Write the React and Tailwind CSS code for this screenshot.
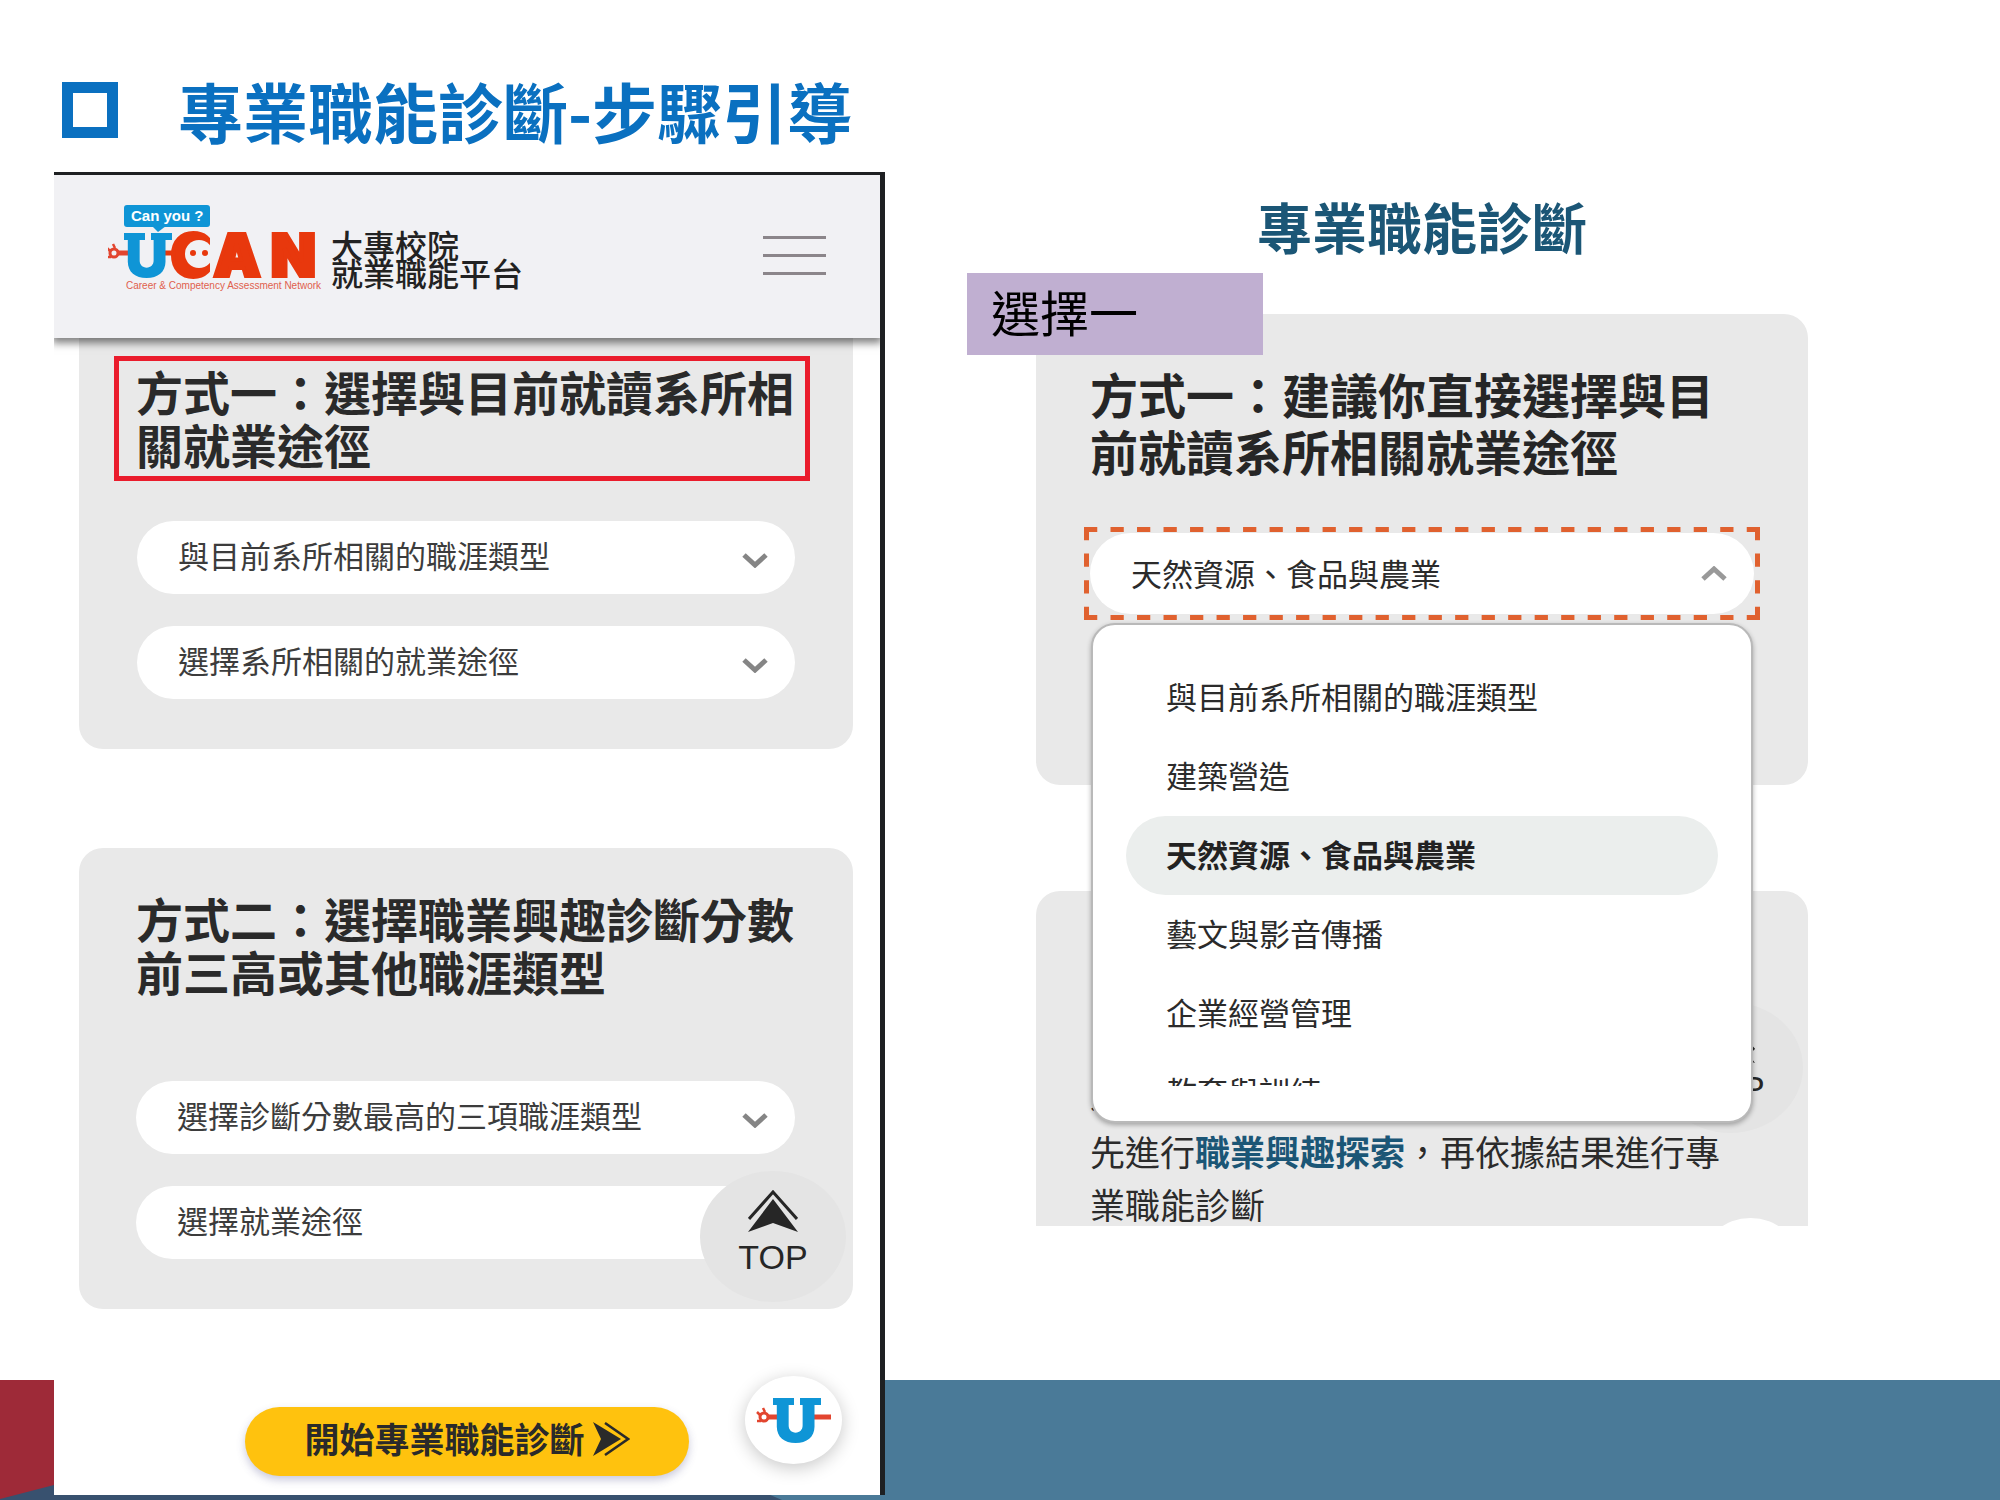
import React, { useState } from "react";

const careerTypes = [
  "與目前系所相關的職涯類型",
  "建築營造",
  "天然資源、食品與農業",
  "藝文與影音傳播",
  "企業經營管理",
  "教育與訓練",
];

const Chevron = ({ up }) => (
  <svg
    viewBox="0 0 26 15"
    className={
      up ? "w-[26px] h-[15px] rotate-180" : "w-[26px] h-[15px]"
    }
    fill="none"
    stroke={up ? "#999999" : "#858585"}
    strokeWidth="5"
    aria-hidden="true"
  >
    <path d="M2 2 L13 12 L24 2" />
  </svg>
);

// Plug with a cord end, shared by the header logo and the chat bubble
const Plug = () => (
  <g fill="none" stroke="#e2452f" strokeWidth="3">
    <circle cx="8" cy="14" r="4" />
    <path d="M7 5 L9 9 M1 9 L4 12 M1 18 H5" strokeWidth="2.5" />
    <path d="M12 14 H24" strokeWidth="5" />
  </g>
);

// Slab "U": plain letter with a bar on each stem
const SlabU = () => (
  <g fill="#0f95d6">
    <text x="0" y="44" fontSize="60" fontWeight="900" fontFamily="Inter, sans-serif">
      U
    </text>
    <rect x="-1" y="0" width="21" height="7" />
    <rect x="26" y="0" width="21" height="7" />
  </g>
);

const Logo = () => (
  <svg viewBox="0 0 216 88" className="w-[216px] h-[88px]" role="img" aria-label="UCAN">
    <rect x="16" y="0" width="86" height="22" rx="3" fill="#0f95d6" />
    <path d="M44 21 H58 L50 27 Z" fill="#0f95d6" />
    <text x="23" y="16" fontSize="15" fontWeight="700" fill="#ffffff" fontFamily="Liberation Sans, sans-serif">
      Can you ?
    </text>
    <g transform="translate(-2 34)">
      <Plug />
    </g>
    <g fill="#e8380d" stroke="#e8380d" strokeWidth="4" fontWeight="900" fontFamily="Inter, sans-serif" fontSize="58">
      <text x="63" y="71">C</text>
      <circle cx="91" cy="49" r="14" fill="#f1f1f4" stroke="none" />
      <rect x="102" y="24" width="12" height="52" fill="#f1f1f4" stroke="none" />
      <text x="106" y="71">A</text>
      <text x="163" y="71">N</text>
    </g>
    <circle cx="85" cy="48" r="3" fill="#e8380d" />
    <circle cx="97" cy="48" r="3" fill="#e8380d" />
    <path d="M56 48 H66" stroke="#e8380d" strokeWidth="5" />
    <g transform="translate(17 28)">
      <SlabU />
    </g>
    <text x="18" y="84" fontSize="10" fill="#e0604c" fontFamily="Liberation Sans, sans-serif">
      Career &amp; Competency Assessment Network
    </text>
  </svg>
);

const SelectPill = ({ id, label }) => (
  <div className="relative">
    <select
      id={id}
      aria-label={label}
      className="block w-full h-[73px] appearance-none rounded-full bg-white pl-[41px] pr-16 pb-[5px] text-[31px] text-[#3c3c3c]"
    >
      <option>{label}</option>
    </select>
    <span className="pointer-events-none absolute right-[27px] top-[32px]">
      <Chevron />
    </span>
  </div>
);

const TopButton = () => (
  <button className="flex h-[131px] w-[146px] flex-col items-center rounded-[50%] bg-[#e4e4e4] pt-[19px] text-[#262626]">
    <svg viewBox="0 0 50 42" className="h-[42px] w-[50px]" aria-hidden="true">
      <path d="M1 29 L25 2 L49 29" fill="none" stroke="#262626" strokeWidth="3" />
      <path d="M25 9 L50 42 L25 33 L0 42 Z" fill="#262626" />
    </svg>
    <span className="mt-2 font-['Liberation_Sans',sans-serif] text-[34px] leading-[34px]">
      TOP
    </span>
  </button>
);

const PhoneHeader = () => (
  <header className="relative z-10 flex h-[163px] items-start bg-[#f1f1f4] px-[54px] pt-[30px] shadow-[0_3px_8px_2px_rgba(0,0,0,0.5)]">
    <Logo />
    <p className="ml-[7px] pt-[25px] text-[32px] leading-[28px] font-medium text-[#222222]">
      大專校院
      <br />
      就業職能平台
    </p>
    <button aria-label="選單" className="mt-[31px] ml-auto flex flex-col gap-[15px]">
      <span className="h-[3px] w-[63px] bg-[#8b858a]" />
      <span className="h-[3px] w-[63px] bg-[#8b858a]" />
      <span className="h-[3px] w-[63px] bg-[#8b858a]" />
    </button>
  </header>
);

const Phone = () => (
  <div className="relative ml-[54px] overflow-hidden border-t-[3px] border-r-[5px] border-[#1e2022] bg-white pb-[19px]">
    <PhoneHeader />

    <section className="mr-[27px] ml-[25px] rounded-b-3xl bg-[#e9e9e9] pt-[18px] pb-[50px]">
      <h2 className="mr-[43px] ml-[35px] border-[5px] border-[#ea1c2c] pt-[3px] pb-[6px] pl-[17px] text-[47px] leading-[53px] font-bold text-[#2a2a2a]">
        方式一：選擇與目前就讀系所相關就業途徑
      </h2>
      <div className="mt-10 mr-[58px] ml-[58px] flex flex-col gap-8">
        <SelectPill id="dept-type" label="與目前系所相關的職涯類型" />
        <SelectPill id="dept-path" label="選擇系所相關的就業途徑" />
      </div>
    </section>

    <section className="relative mt-[99px] mr-[27px] ml-[25px] rounded-3xl bg-[#e9e9e9] pt-[43px] pb-[50px] pl-[57px]">
      <h2 className="pr-[58px] text-[47px] leading-[53px] font-bold text-[#2a2a2a]">
        方式二：選擇職業興趣診斷分數前三高或其他職涯類型
      </h2>
      <div className="mt-[84px] mr-[58px] flex flex-col gap-8">
        <SelectPill id="top-three" label="選擇診斷分數最高的三項職涯類型" />
        <SelectPill id="job-path" label="選擇就業途徑" />
      </div>
      <div className="absolute right-[7px] bottom-[7px]">
        <TopButton />
      </div>
    </section>

    <button className="mx-auto mt-[98px] flex h-[69px] w-[444px] items-center justify-center gap-2 rounded-full bg-[#ffc20e] pb-[6px] text-[35px] font-bold text-[#2a2a2a] shadow-[0_4px_8px_rgba(80,80,140,0.3)]">
      開始專業職能診斷
      <svg viewBox="0 0 37 34" className="h-[34px] w-[37px]" aria-hidden="true">
        <path d="M12 1 L35 17 L12 33" fill="none" stroke="#2a2a2a" strokeWidth="2.5" />
        <path d="M0 0 L28 17 L0 34 L8 17 Z" fill="#2a2a2a" />
      </svg>
    </button>

    <button
      aria-label="UCAN"
      className="absolute right-[38px] bottom-[31px] flex h-[88px] w-[97px] items-center justify-center rounded-[50%] bg-white shadow-[0_4px_18px_rgba(0,0,0,0.22)]"
    >
      <svg viewBox="0 0 76 50" className="h-[50px] w-[76px]" aria-hidden="true">
        <g transform="translate(0 8)">
          <Plug />
        </g>
        <path d="M58 22 H75" stroke="#e2452f" strokeWidth="5" />
        <g transform="translate(18 3)">
          <SlabU />
        </g>
      </svg>
    </button>
  </div>
);

const CareerDropdown = () => {
  const [open, setOpen] = useState(true);
  const [selected, setSelected] = useState("天然資源、食品與農業");

  const handleSelect = (type) => {
    setSelected(type);
    setOpen(false);
  };

  return (
    <div className="relative mx-12 mt-12 px-[6px] py-[6px]">
      <button
        aria-haspopup="listbox"
        aria-expanded={open}
        onClick={() => setOpen(!open)}
        className="flex h-[81px] w-full items-center justify-between rounded-full bg-white pr-[27px] pl-[41px] text-[31px] text-[#2b2b2b]"
      >
        {selected}
        <Chevron up={open} />
      </button>

      {/* Dashed highlight around the field */}
      <svg
        className="pointer-events-none absolute inset-0 h-full w-full"
        viewBox="0 0 676 93"
        preserveAspectRatio="none"
        fill="none"
        stroke="#e0612f"
        strokeWidth="5"
        aria-hidden="true"
      >
        <path d="M0 2.5 H676" pathLength="51" strokeDasharray="1 1" />
        <path d="M0 90.5 H676" pathLength="51" strokeDasharray="1 1" />
        <path d="M2.5 0 V93" pathLength="7" strokeDasharray="1 1" />
        <path d="M673.5 0 V93" pathLength="7" strokeDasharray="1 1" />
      </svg>

      {open && (
        <div className="absolute inset-x-[7px] top-[96px] rounded-3xl border-2 border-[#b9b9b9] bg-white px-[33px] pt-[33px] pb-[35px] shadow-[0_2px_5px_rgba(0,0,0,0.3)]">
          <ul role="listbox" aria-label="職涯類型" className="h-[428px] overflow-hidden">
            {careerTypes.map((type) => (
              <li
                key={type}
                role="option"
                aria-selected={type === selected}
                onClick={() => handleSelect(type)}
                className={
                  type === selected
                    ? "h-[79px] cursor-pointer rounded-full bg-[#ebeeed] pl-10 text-[31px] leading-[75px] font-bold text-[#222222]"
                    : "h-[79px] cursor-pointer pl-10 text-[31px] leading-[75px] text-[#2b2b2b]"
                }
              >
                {type}
              </li>
            ))}
          </ul>
        </div>
      )}
    </div>
  );
};

const Guide = () => (
  <div className="pt-[197px] pr-[192px] pl-[151px]">
    <h2 className="text-center text-[55px] leading-[56px] font-bold text-[#1b5676]">
      專業職能診斷
    </h2>

    <section className="relative z-10 mt-[61px] rounded-3xl bg-[#e9e9e9] pt-[51px] pb-[165px]">
      <p className="absolute top-[-41px] left-[-69px] h-[82px] w-[296px] bg-[#c0afd1] pl-6 text-[49px] leading-[75px] text-black">
        選擇一
      </p>
      <h3 className="px-[54px] text-[48px] leading-[57px] font-bold text-[#262626]">
        方式一：建議你直接選擇與目前就讀系所相關就業途徑
      </h3>
      <CareerDropdown />
    </section>

    <section className="relative mt-[106px] h-[335px] overflow-hidden rounded-t-3xl bg-[#e9e9e9] pt-[180px] pr-[54px] pl-[54px]">
      <div className="absolute top-[111px] right-[5px]">
        <TopButton />
      </div>
      <p className="relative text-[35px] leading-[53px] text-[#2b2b2b]">
        若
        <br />
        先進行
        <a href="#interest" className="font-bold text-[#1b5676]">
          職業興趣探索
        </a>
        ，再依據結果進行專業職能診斷
      </p>
      <span className="absolute right-[9px] bottom-[-80px] h-[88px] w-[97px] rounded-[50%] bg-white" />
    </section>
  </div>
);

const App = () => {
  return (
    <div className="relative isolate min-h-screen overflow-hidden bg-white font-['Noto_Sans_CJK_TC',sans-serif]">
      {/* Slide footer band */}
      <div className="absolute inset-x-0 bottom-0 -z-10 h-[120px] bg-[#4a7a98]">
        <svg
          viewBox="0 0 800 120"
          className="h-full w-[800px]"
          aria-hidden="true"
        >
          <path d="M0 0 H400 V120 H0 Z" fill="#9e2a38" />
          <path d="M0 119 L54 105 L400 60 L768 114 L782 120 H0 Z" fill="#38516f" />
        </svg>
      </div>

      <main className="grid grid-cols-[885fr_1115fr] pb-[5px]">
        <div>
          <h1 className="flex items-center gap-[60px] pt-[77px] pb-[29px] pl-[62px] text-[65px] leading-[66px] font-bold text-[#0a70c0]">
            <span className="h-14 w-14 border-[11px] border-[#0a70c0]" />
            專業職能診斷-步驟引導
          </h1>
          <Phone />
        </div>
        <Guide />
      </main>
    </div>
  );
};

export default App;
